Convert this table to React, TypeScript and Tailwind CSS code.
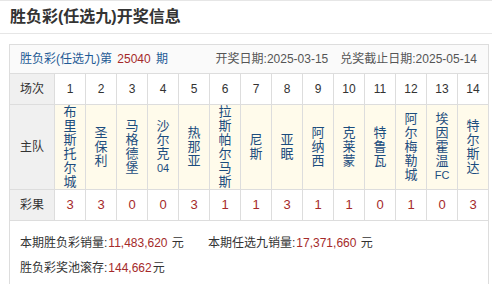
const teams: string[][] = [
  ['布', '里', '斯', '托', '尔', '城'],
  ['圣', '保', '利'],
  ['马', '格', '德', '堡'],
  ['沙', '尔', '克', '04'],
  ['热', '那', '亚'],
  ['拉', '斯', '帕', '尔', '马', '斯'],
  ['尼', '斯'],
  ['亚', '眠'],
  ['阿', '纳', '西'],
  ['克', '莱', '蒙'],
  ['特', '鲁', '瓦'],
  ['阿', '尔', '梅', '勒', '城'],
  ['埃', '因', '霍', '温', 'FC'],
  ['特', '尔', '斯', '达'],
];

const results = ['3', '3', '0', '0', '3', '1', '1', '3', '1', '1', '0', '1', '0', '3'];

const cols = 'grid grid-cols-[45px_repeat(13,31px)_30px]';

export default function App() {
  return (
    <div className="w-[492px] h-[284px] overflow-hidden bg-white text-[#333] [font-family:'Liberation_Sans','Noto_Sans_CJK_SC',sans-serif]">
      {/* 标题 */}
      <div className="h-[34px] border-y border-[#e6e6e6] px-[10px] flex items-center">
        <h1 className="text-[16px] font-bold text-[#333]">胜负彩(任选九)开奖信息</h1>
      </div>

      {/* 开奖信息 */}
      <div className="mt-[10px] ml-[9px] w-[480px] border border-[#dddddd] pb-[20px]">
        <div className="h-[29px] bg-[#fafafa] border-b border-[#dddddd] px-[10px] flex items-center justify-between text-[12px]">
          <div className="text-[#1f5a96]">
            胜负彩(任选九)第 <span className="text-[#a52a2a] px-[2px]">25040</span> 期
          </div>
          <div className="text-[#555] pr-[1px]">
            开奖日期:2025-03-15<span className="inline-block w-[12px]"></span>兑奖截止日期:2025-05-14
          </div>
        </div>

        {/* 场次 */}
        <div className={`${cols} h-[31px] border-b border-[#dddddd] text-[12px]`}>
          <div className="bg-[#f0f0f0] border-r border-[#dddddd] flex items-center justify-center text-[#333]">场次</div>
          {results.map((_, i) => (
            <div key={i} className={`flex items-center justify-center text-[#333] ${i < 13 ? 'border-r border-[#dddddd]' : ''}`}>
              {i + 1}
            </div>
          ))}
        </div>

        {/* 主队 */}
        <div className={`${cols} h-[85px] border-b border-[#dddddd]`}>
          <div className="bg-[#f0f0f0] border-r border-[#dddddd] flex items-center justify-center text-[12px] text-[#333]">主队</div>
          {teams.map((t, i) => (
            <div key={i} className={`bg-[#fffbeb] flex flex-col items-center justify-center text-[#1c4d7e] ${i < 13 ? 'border-r border-[#dddddd]' : ''}`}>
              {t.map((c, j) => (
                <span key={j} className={c.length > 1 ? 'text-[11px] leading-[14px]' : 'text-[13px] leading-[14px]'}>{c}</span>
              ))}
            </div>
          ))}
        </div>

        {/* 彩果 */}
        <div className={`${cols} h-[31px] border-b border-[#dddddd] text-[12px]`}>
          <div className="bg-[#f0f0f0] border-r border-[#dddddd] flex items-center justify-center text-[#333]">彩果</div>
          {results.map((r, i) => (
            <div key={i} className={`flex items-center justify-center text-[#a52a2a] text-[13px] ${i < 13 ? 'border-r border-[#dddddd]' : ''}`}>
              {r}
            </div>
          ))}
        </div>

        {/* 销量 */}
        <div className="pt-[10px] px-[10px] text-[12px] leading-[25px] text-[#333]">
          <div className="flex">
            <span className="w-[188px]">
              本期胜负彩销量:<span className="text-[#a52a2a] px-[1px]">11,483,620</span> 元
            </span>
            <span>
              本期任选九销量:<span className="text-[#a52a2a] px-[1px]">17,371,660</span> 元
            </span>
          </div>
          <div>
            胜负彩奖池滚存:<span className="text-[#a52a2a] px-[1px]">144,662</span>元
          </div>
        </div>
      </div>
    </div>
  );
}
